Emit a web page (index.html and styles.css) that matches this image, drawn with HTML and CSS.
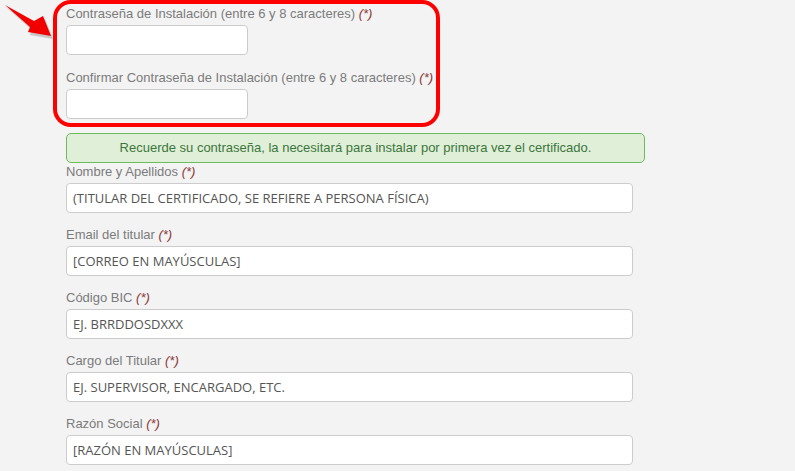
FILE: index.html
```html
<!DOCTYPE html>
<html lang="es">
<head>
<meta charset="utf-8">
<link rel="stylesheet" href="styles.css">
</head>
<body>
<div class="page">
  <svg class="arrow" width="60" height="45" viewBox="0 0 60 45">
    <polygon class="arrow-shadow" points="7,8 36,24 45,19 53,39 30,35 32,30"/>
    <polygon class="arrow-body" points="5,5 34,21 43,16 51,36 28,32 30,27"/>
  </svg>
  <div class="form">
    <section class="highlight">
      <div class="field">
        <label class="label">Contraseña de Instalación (entre 6 y 8 caracteres) <em class="req">(*)</em></label>
        <input class="input short" type="password">
      </div>
      <div class="field last">
        <label class="label">Confirmar Contraseña de Instalación (entre 6 y 8 caracteres) <em class="req">(*)</em></label>
        <input class="input short" type="password">
      </div>
    </section>
    <div class="alert">Recuerde su contraseña, la necesitará para instalar por primera vez el certificado.</div>
    <div class="field">
      <label class="label">Nombre y Apellidos <em class="req">(*)</em></label>
      <input class="input" type="text" value="(TITULAR DEL CERTIFICADO, SE REFIERE A PERSONA FÍSICA)">
    </div>
    <div class="field">
      <label class="label">Email del titular <em class="req">(*)</em></label>
      <input class="input" type="text" value="[CORREO EN MAYÚSCULAS]">
    </div>
    <div class="field">
      <label class="label">Código BIC <em class="req">(*)</em></label>
      <input class="input" type="text" value="EJ. BRRDDOSDXXX">
    </div>
    <div class="field">
      <label class="label">Cargo del Titular <em class="req">(*)</em></label>
      <input class="input" type="text" value="EJ. SUPERVISOR, ENCARGADO, ETC.">
    </div>
    <div class="field">
      <label class="label">Razón Social <em class="req">(*)</em></label>
      <input class="input" type="text" value="[RAZÓN EN MAYÚSCULAS]">
    </div>
  </div>
</div>
</body>
</html>
```
FILE: styles.css
```css
html, body {
  margin: 0;
  padding: 0;
  background: #f3f3f3;
  height: 100%;
  overflow: hidden;
}
.page {
  position: relative;
  font-family: "Liberation Sans", Arial, sans-serif;
}
.arrow {
  position: absolute;
  left: 0;
  top: 0;
}
.arrow-body { fill: #f20000; }
.arrow-shadow { fill: rgba(0,0,0,0.18); }
.form {
  padding-left: 66px;
  width: 579px;
}
.highlight {
  margin-left: -13px;
  width: 361px;
  border: 4px solid #ff0000;
  border-radius: 18px;
  padding: 1px 9px 4px 9px;
}
.field {
  display: flex;
  flex-direction: column;
  align-items: flex-start;
  margin-bottom: 13px;
}
.highlight .field { margin-bottom: 14px; }
.highlight .field.last { margin-bottom: 0; }
.label {
  display: block;
  font-size: 13px;
  line-height: 18px;
  height: 18px;
  color: #7b7b7b;
  margin-bottom: 2px;
  white-space: nowrap;
}
.req {
  font-style: italic;
  color: #8c3a3a;
}
.input {
  box-sizing: border-box;
  width: 567px;
  height: 30px;
  margin: 0;
  border: 1px solid #cccccc;
  border-radius: 4px;
  background: #ffffff;
  padding: 0 6px;
  font-family: "Open Sans", "Segoe UI", sans-serif;
  font-size: 13px;
  color: #555555;
  outline: none;
}
.input.short { width: 182px; }
.alert {
  box-sizing: border-box;
  margin-top: 6px;
  width: 579px;
  height: 30px;
  border: 1px solid #6cbb5c;
  border-radius: 5px;
  background: #e0efd8;
  color: #3c763d;
  font-size: 13px;
  line-height: 28px;
  text-align: center;
  white-space: nowrap;
}
```
